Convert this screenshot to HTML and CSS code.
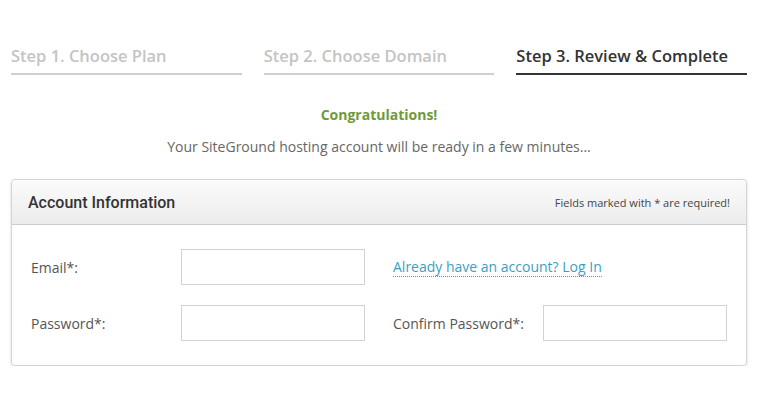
FILE: index.html
```html
<!DOCTYPE html>
<html lang="en">
<head>
    <meta charset="UTF-8">
    <meta name="viewport" content="width=device-width, initial-scale=1.0">
    <title>SiteGround - Review &amp; Complete</title>
    <link rel="stylesheet" href="styles.css">
</head>
<body>
    <div class="page">
        <div class="steps">
            <div class="step">Step 1. Choose Plan</div>
            <div class="step">Step 2. Choose Domain</div>
            <div class="step active">Step 3. Review &amp; Complete</div>
        </div>

        <div class="intro">
            <p class="congrats">Congratulations!</p>
            <p class="ready">Your SiteGround hosting account will be ready in a few minutes...</p>
        </div>

        <div class="card">
            <div class="card-header">
                <h2>Account Information</h2>
                <span class="required-note">Fields marked with * are required!</span>
            </div>
            <div class="card-body">
                <div class="form-row">
                    <div class="field">
                        <label for="email">Email*:</label>
                        <input type="email" id="email">
                    </div>
                    <div class="field">
                        <a href="#" class="login-link">Already have an account? Log In</a>
                    </div>
                </div>
                <div class="form-row">
                    <div class="field">
                        <label for="password">Password*:</label>
                        <input type="password" id="password">
                    </div>
                    <div class="field">
                        <label for="confirm">Confirm Password*:</label>
                        <input type="password" id="confirm">
                    </div>
                </div>
            </div>
        </div>
    </div>
</body>
</html>
```

FILE: styles.css
```css
body {
    margin: 0;
    font-family: "Open Sans", Arial, sans-serif;
    background-color: #fff;
    color: #555;
}
.page {
    padding: 0 15px 0 11px;
}
.steps {
    display: grid;
    grid-template-columns: repeat(3, 1fr);
    column-gap: 22px;
    padding-top: 44px;
}
.step {
    font-size: 16.5px;
    font-weight: 600;
    color: #c4c4c4;
    padding-bottom: 5px;
    border-bottom: 2px solid #cfcfcf;
    line-height: 24px;
}
.step.active {
    color: #333;
    border-bottom-color: #333;
}
.intro {
    text-align: center;
    margin-top: 29px;
}
.intro p {
    margin: 0;
}
.congrats {
    font-size: 14px;
    font-weight: 700;
    color: #6f9a3b;
    line-height: 22px;
}
.ready {
    font-size: 14px;
    color: #666;
    line-height: 22px;
    margin-top: 10px !important;
}
.card {
    margin-top: 21px;
    border: 1px solid #d4d4d4;
    border-radius: 4px;
    box-shadow: 0 1px 3px rgba(0,0,0,0.15);
    width: 734px;
}
.card-header {
    display: flex;
    align-items: center;
    justify-content: space-between;
    height: 44px;
    padding: 0 16px 0 16px;
    background: linear-gradient(#fbfbfb, #ececec);
    border-bottom: 1px solid #cdcdcd;
    border-radius: 4px 4px 0 0;
}
.card-header h2 {
    margin: 0;
    font-family: Roboto, Arial, sans-serif;
    font-weight: 500;
    font-size: 16px;
    color: #333;
}
.required-note {
    font-size: 11px;
    color: #444;
}
.card-body {
    padding: 24px 19px 24px 19px;
    display: flex;
    flex-direction: column;
    gap: 20px;
}
.form-row {
    display: flex;
    gap: 28px;
}
.field {
    display: flex;
    align-items: center;
    height: 36px;
}
.field label {
    width: 150px;
    font-size: 14px;
    color: #555;
}
.field input {
    width: 184px;
    height: 36px;
    box-sizing: border-box;
    border: 1px solid #d2d2d2;
    border-radius: 0;
    margin: 0;
    padding: 0 8px;
}
.login-link {
    font-size: 14px;
    color: #3d9ec2;
    text-decoration: none;
    border-bottom: 1px dotted #3d9ec2;
    line-height: 18px;
}
```
